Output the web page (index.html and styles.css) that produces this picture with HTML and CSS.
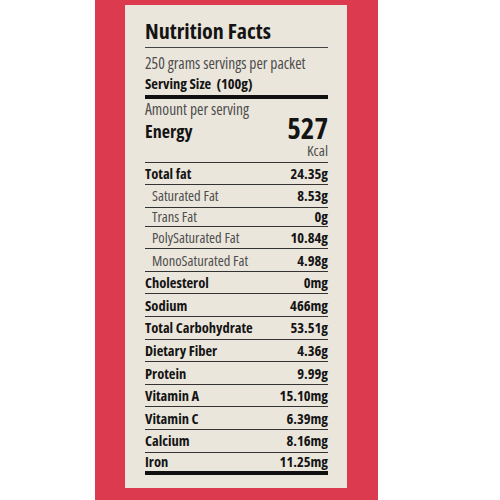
FILE: index.html
```html
<!DOCTYPE html>
<html>
<head>
<meta charset="utf-8">
<link rel="stylesheet" href="styles.css">
</head>
<body>
<div class="panel">
  <div class="card">
    <h1 class="title">Nutrition Facts</h1>
    <p class="servings">250 grams servings per packet</p>
    <p class="size">Serving Size&nbsp; (100g)</p>
    <p class="amount">Amount per serving</p>
    <div class="energy">
      <span class="energy-label">Energy</span>
      <div class="energy-value">
        <span class="kcal-num">527</span>
        <span class="kcal-unit">Kcal</span>
      </div>
    </div>
    <div class="row"><span>Total fat</span><b>24.35g</b></div>
    <div class="row sub"><span>Saturated Fat</span><b>8.53g</b></div>
    <div class="row sub short"><span>Trans Fat</span><b>0g</b></div>
    <div class="row sub"><span>PolySaturated Fat</span><b>10.84g</b></div>
    <div class="row sub"><span>MonoSaturated Fat</span><b>4.98g</b></div>
    <div class="row"><span>Cholesterol</span><b>0mg</b></div>
    <div class="row"><span>Sodium</span><b>466mg</b></div>
    <div class="row"><span>Total Carbohydrate</span><b>53.51g</b></div>
    <div class="row"><span>Dietary Fiber</span><b>4.36g</b></div>
    <div class="row"><span>Protein</span><b>9.99g</b></div>
    <div class="row"><span>Vitamin A</span><b>15.10mg</b></div>
    <div class="row"><span>Vitamin C</span><b>6.39mg</b></div>
    <div class="row"><span>Calcium</span><b>8.16mg</b></div>
    <div class="row last"><span>Iron</span><b>11.25mg</b></div>
  </div>
</div>
</body>
</html>
```
FILE: styles.css
```css
* { box-sizing: border-box; }
html, body { margin: 0; padding: 0; background: #ffffff; }
body {
  font-family: "Open Sans", "DejaVu Sans Condensed", sans-serif;
  font-stretch: 75%;
  color: #141414;
}
.panel {
  width: 283px;
  height: 500px;
  margin-left: 95px;
  padding: 5px 31px 0 30px;
  background: #dc3a4e;
}
.card {
  height: 483px;
  padding: 0 19px 0 20px;
  background: #ebe6dc;
}
.title {
  margin: 0;
  padding-top: 12px;
  height: 43px;
  font-size: 22px;
  line-height: 26px;
  font-weight: 700;
  border-bottom: 1.5px solid #444;
}
.servings, .size, .amount {
  margin: 0;
  font-size: 15.5px;
  line-height: 18px;
  white-space: nowrap;
}
.servings { margin-top: 6px; color: #4d4d4d; }
.size {
  margin-top: 3px;
  font-size: 14.5px;
  font-weight: 700;
  height: 23.5px;
  border-bottom: 4px solid #111;
}
.amount { color: #4d4d4d; margin-top: 1.5px; }
.energy {
  display: flex;
  justify-content: space-between;
  align-items: flex-start;
  height: 44.5px;
  border-bottom: 1.5px solid #333;
}
.energy-label { margin-top: 2px; font-size: 18px; line-height: 22px; font-weight: 700; }
.energy-value { display: flex; flex-direction: column; align-items: flex-end; }
.kcal-num { margin-top: -4px; font-size: 29px; line-height: 27px; font-weight: 700; }
.kcal-unit { margin-top: 0; font-size: 15px; line-height: 18px; color: #4d4d4d; }
.row {
  display: flex;
  justify-content: space-between;
  align-items: center;
  height: 22.6px;
  font-size: 14.5px;
  white-space: nowrap;
  border-bottom: 1.5px solid #333;
}
.row span { font-weight: 700; }
.row b { font-weight: 700; }
.row.sub span { font-weight: 400; color: #4d4d4d; padding-left: 7px; }
.row.short { height: 19px; }
.row.last { border-bottom: 4px solid #111; }
```
